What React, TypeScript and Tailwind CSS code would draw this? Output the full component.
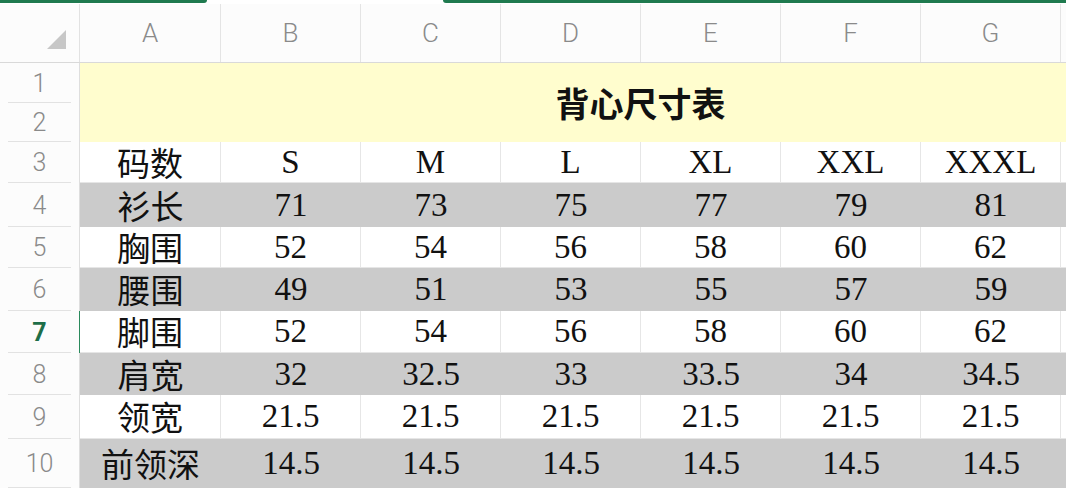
import React from "react";

const COLS = ["A", "B", "C", "D", "E", "F", "G", ""];
const colW = (i: number) => (i === 0 ? "w-[141px]" : "w-[140px]");

type Row = { n: number; label: string; vals: string[]; h: string; gray: boolean };

const ROWS: Row[] = [
  { n: 3, label: "码数", vals: ["S", "M", "L", "XL", "XXL", "XXXL"], h: "h-[41px]", gray: false },
  { n: 4, label: "衫长", vals: ["71", "73", "75", "77", "79", "81"], h: "h-[44px]", gray: true },
  { n: 5, label: "胸围", vals: ["52", "54", "56", "58", "60", "62"], h: "h-[41px]", gray: false },
  { n: 6, label: "腰围", vals: ["49", "51", "53", "55", "57", "59"], h: "h-[43px]", gray: true },
  { n: 7, label: "脚围", vals: ["52", "54", "56", "58", "60", "62"], h: "h-[42px]", gray: false },
  { n: 8, label: "肩宽", vals: ["32", "32.5", "33", "33.5", "34", "34.5"], h: "h-[42px]", gray: true },
  { n: 9, label: "领宽", vals: ["21.5", "21.5", "21.5", "21.5", "21.5", "21.5"], h: "h-[44px]", gray: false },
  { n: 10, label: "前领深", vals: ["14.5", "14.5", "14.5", "14.5", "14.5", "14.5"], h: "h-[49px]", gray: true },
];

const hdrFont = { fontFamily: "Roboto, 'Liberation Sans', sans-serif" };

function RowHeader({ n, h, selected }: { n: number; h: string; selected?: boolean }) {
  return (
    <div
      className={`${h} w-[80px] shrink-0 relative flex items-center justify-center bg-[#fcfcfc] border-r ${
        selected ? "border-[#2a8a5c]" : "border-[#dedede]"
      }`}
    >
      <span
        className={`text-[25px] leading-none ${selected ? "text-[#1e6e48] font-bold" : "text-[#8a8a8a] font-light"}`}
        style={hdrFont}
      >
        {n}
      </span>
      <div className="absolute bottom-0 left-[8px] right-[8px] h-px bg-[#e2e2e2]" />
    </div>
  );
}

export default function App() {
  return (
    <div className="w-[1066px] h-[488px] overflow-hidden bg-white">
      {/* top green tab strip */}
      <div className="h-[4px] flex bg-white">
        <div className="w-[207px] h-[3px] bg-[#1f7a4f] rounded-br-[3px]" />
        <div className="w-[236px]" />
        <div className="flex-1 h-[3px] bg-[#1f7a4f] rounded-bl-[3px]" />
      </div>

      {/* column header row */}
      <div className="flex h-[59px] w-[1400px] border-b border-[#d9d9d9] bg-[#fcfcfc]">
        <div className="w-[80px] shrink-0 flex items-end justify-end pr-[13px] pb-[13px] border-r border-[#e2e2e2]">
          <svg width="19" height="19" viewBox="0 0 19 19">
            <polygon points="19,0 19,19 0,19" fill="#c7c7c7" />
          </svg>
        </div>
        {COLS.map((c, i) => (
          <div
            key={i}
            className={`${colW(i)} shrink-0 flex items-center justify-center border-r border-[#e4e4e4]`}
          >
            <span className="text-[26px] font-light leading-none text-[#8a8a8a]" style={hdrFont}>
              {c}
            </span>
          </div>
        ))}
      </div>

      {/* merged title rows 1-2 */}
      <div className="flex w-[1400px]">
        <div className="flex flex-col">
          <RowHeader n={1} h="h-[40px]" />
          <RowHeader n={2} h="h-[39px]" />
        </div>
        <div className="w-[1121px] shrink-0 bg-[#fffdce] flex items-center justify-center">
          <span
            className="text-[34px] font-bold leading-none text-[#111]"
            style={{ fontFamily: "'Noto Sans CJK SC', sans-serif" }}
          >
            背心尺寸表
          </span>
        </div>
        <div className="flex-1 bg-[#fffdce]" />
      </div>

      {/* data rows */}
      {ROWS.map((r) => (
        <div key={r.n} className="flex w-[1400px]">
          <RowHeader n={r.n} h={r.h} selected={r.n === 7} />
          <div className={`flex flex-1 ${r.gray ? "bg-[#cbcbcb]" : "bg-white"}`}>
            {[r.label, ...r.vals, ""].map((v, i) => (
              <div
                key={i}
                className={`${r.h} ${colW(i)} shrink-0 flex items-center justify-center ${
                  r.gray ? "" : "border-r border-b border-[#e6e6e6]"
                }`}
              >
                <span
                  className="text-[33px] leading-[33px] text-[#111]"
                  style={{
                    fontFamily:
                      i === 0
                        ? "'Noto Sans CJK SC', sans-serif"
                        : "'Liberation Serif', 'Times New Roman', serif",
                  }}
                >
                  {v}
                </span>
              </div>
            ))}
          </div>
        </div>
      ))}
    </div>
  );
}
